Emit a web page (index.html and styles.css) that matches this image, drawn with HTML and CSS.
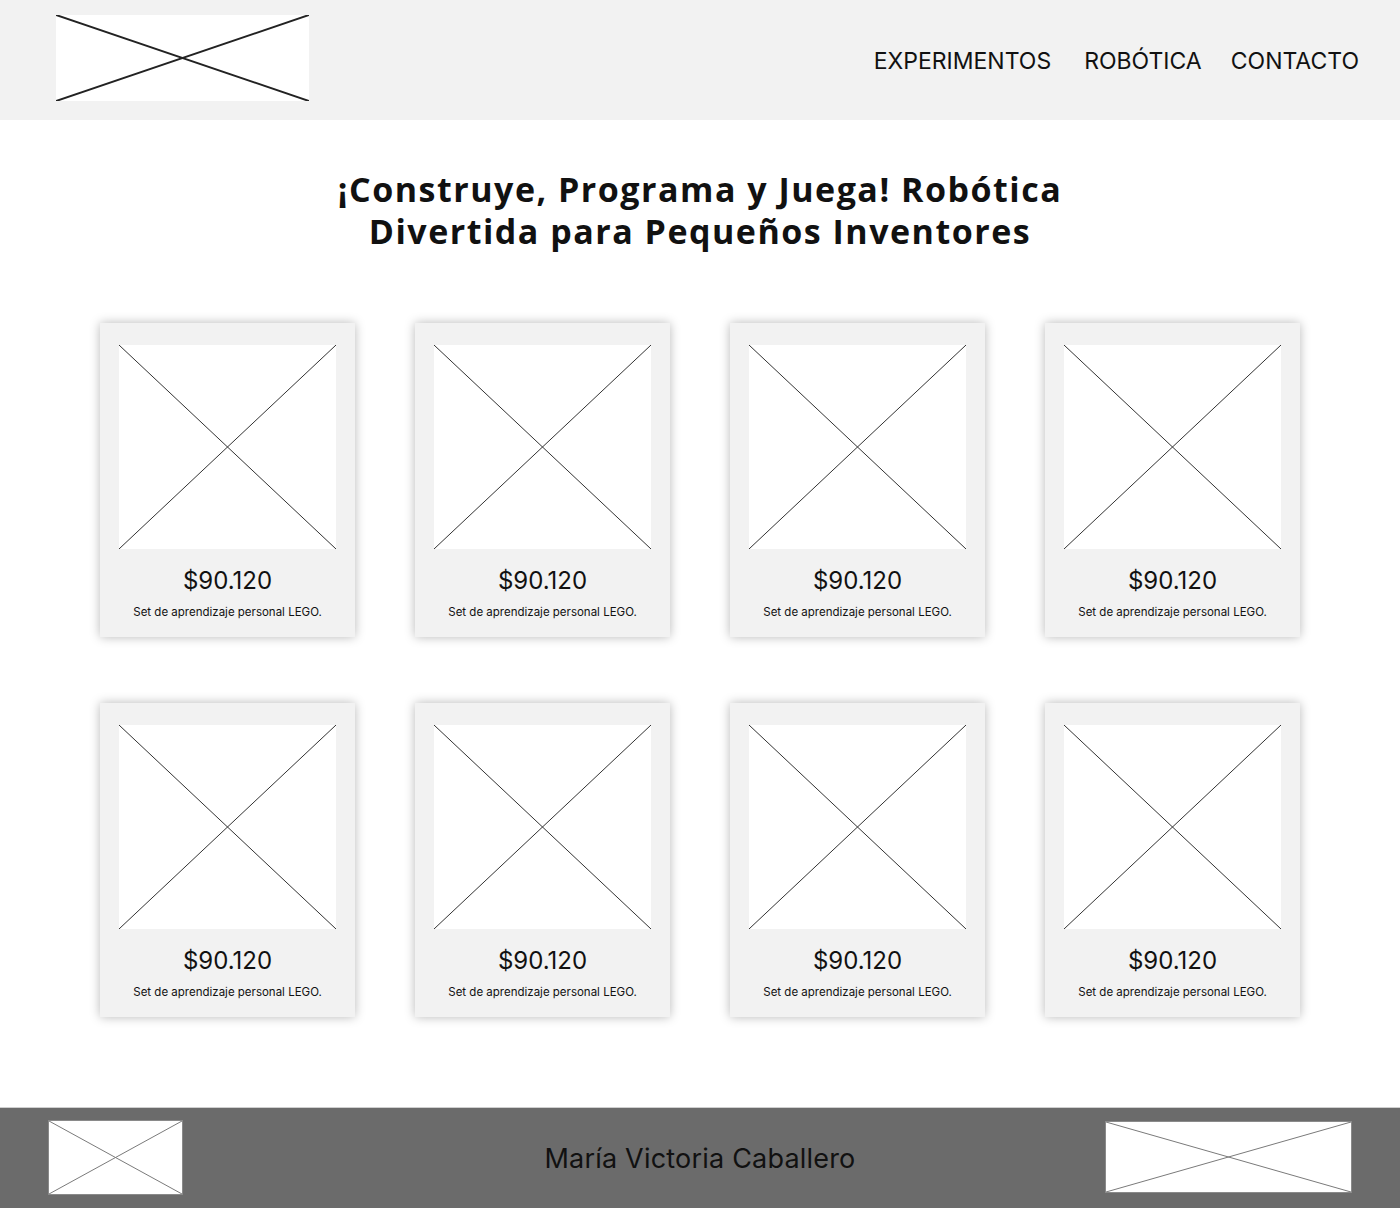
FILE: index.html
```html
<!DOCTYPE html>
<html lang="es">
<head>
<meta charset="utf-8">
<title>Robótica</title>
<link rel="stylesheet" href="styles.css">
</head>
<body>
<header class="header">
  <div class="logo">
    <svg class="ph" viewBox="0 0 253 86" preserveAspectRatio="none"><line x1="0" y1="0" x2="253" y2="86"/><line x1="0" y1="86" x2="253" y2="0"/></svg>
  </div>
  <nav class="nav">
    <a class="nav-item n1">EXPERIMENTOS</a>
    <a class="nav-item n2">ROBÓTICA</a>
    <a class="nav-item n3">CONTACTO</a>
  </nav>
</header>
<main class="main">
  <h1 class="title">¡Construye, Programa y Juega! Robótica<br>Divertida para Pequeños Inventores</h1>
  <section class="grid">
    <article class="card"><div class="img"><svg viewBox="0 0 217 204" preserveAspectRatio="none"><line x1="0" y1="0" x2="217" y2="204"/><line x1="0" y1="204" x2="217" y2="0"/></svg></div><p class="price">$90.120</p><p class="desc">Set de aprendizaje personal LEGO.</p></article>
    <article class="card"><div class="img"><svg viewBox="0 0 217 204" preserveAspectRatio="none"><line x1="0" y1="0" x2="217" y2="204"/><line x1="0" y1="204" x2="217" y2="0"/></svg></div><p class="price">$90.120</p><p class="desc">Set de aprendizaje personal LEGO.</p></article>
    <article class="card"><div class="img"><svg viewBox="0 0 217 204" preserveAspectRatio="none"><line x1="0" y1="0" x2="217" y2="204"/><line x1="0" y1="204" x2="217" y2="0"/></svg></div><p class="price">$90.120</p><p class="desc">Set de aprendizaje personal LEGO.</p></article>
    <article class="card"><div class="img"><svg viewBox="0 0 217 204" preserveAspectRatio="none"><line x1="0" y1="0" x2="217" y2="204"/><line x1="0" y1="204" x2="217" y2="0"/></svg></div><p class="price">$90.120</p><p class="desc">Set de aprendizaje personal LEGO.</p></article>
    <article class="card"><div class="img"><svg viewBox="0 0 217 204" preserveAspectRatio="none"><line x1="0" y1="0" x2="217" y2="204"/><line x1="0" y1="204" x2="217" y2="0"/></svg></div><p class="price">$90.120</p><p class="desc">Set de aprendizaje personal LEGO.</p></article>
    <article class="card"><div class="img"><svg viewBox="0 0 217 204" preserveAspectRatio="none"><line x1="0" y1="0" x2="217" y2="204"/><line x1="0" y1="204" x2="217" y2="0"/></svg></div><p class="price">$90.120</p><p class="desc">Set de aprendizaje personal LEGO.</p></article>
    <article class="card"><div class="img"><svg viewBox="0 0 217 204" preserveAspectRatio="none"><line x1="0" y1="0" x2="217" y2="204"/><line x1="0" y1="204" x2="217" y2="0"/></svg></div><p class="price">$90.120</p><p class="desc">Set de aprendizaje personal LEGO.</p></article>
    <article class="card"><div class="img"><svg viewBox="0 0 217 204" preserveAspectRatio="none"><line x1="0" y1="0" x2="217" y2="204"/><line x1="0" y1="204" x2="217" y2="0"/></svg></div><p class="price">$90.120</p><p class="desc">Set de aprendizaje personal LEGO.</p></article>
  </section>
</main>
<footer class="footer">
  <div class="flogo flogo-left"><svg viewBox="0 0 135 75" preserveAspectRatio="none"><line x1="0" y1="0" x2="135" y2="75"/><line x1="0" y1="75" x2="135" y2="0"/></svg></div>
  <p class="fname">María Victoria Caballero</p>
  <div class="flogo flogo-right"><svg viewBox="0 0 247 72" preserveAspectRatio="none"><line x1="0" y1="0" x2="247" y2="72"/><line x1="0" y1="72" x2="247" y2="0"/></svg></div>
</footer>
</body>
</html>
```

FILE: styles.css
```css
* { box-sizing: border-box; }
html, body { margin: 0; padding: 0; }
body {
  width: 1400px;
  background: #ffffff;
  font-family: "Inter", "Liberation Sans", sans-serif;
  color: #111;
}
p { margin: 0; }

.header {
  height: 120px;
  background: #f2f2f2;
  display: flex;
  align-items: flex-start;
  justify-content: space-between;
  padding: 15px 41px 0 56px;
}
.logo {
  width: 253px;
  height: 86px;
  background: #fff;
}
.logo svg { display: block; width: 100%; height: 100%; }
.logo line { stroke: #222; stroke-width: 2; }

.nav {
  display: flex;
  align-items: center;
  margin-top: 31px;
}
.nav-item {
  font-size: 23px;
  line-height: 30px;
  font-weight: 400;
  color: #111;
}
.n2 { margin-left: 33px; }
.n3 { margin-left: 29px; }

.main {
  padding: 48px 0 90px;
}
.title {
  margin: 0;
  text-align: center;
  font-family: "Open Sans", "Liberation Sans", sans-serif;
  font-weight: 700;
  font-size: 34px;
  line-height: 42px;
  letter-spacing: 1.5px;
  color: #111;
}
.grid {
  width: 1200px;
  margin: 71px auto 0;
  display: grid;
  grid-template-columns: repeat(4, 255px);
  column-gap: 60px;
  row-gap: 66px;
}
.card {
  height: 314px;
  background: #f2f2f2;
  box-shadow: 0 0 10px rgba(0,0,0,0.28);
  padding: 22px 19px 0;
  display: flex;
  flex-direction: column;
  align-items: center;
}
.img {
  width: 217px;
  height: 204px;
  background: #fff;
}
.img svg { display: block; width: 100%; height: 100%; }
.img line { stroke: #333; stroke-width: 1; }
.price {
  margin-top: 17px;
  font-size: 24px;
  line-height: 30px;
  color: #111;
}
.desc {
  margin-top: 8px;
  font-size: 11.5px;
  line-height: 16px;
  color: #111;
}

.footer {
  height: 101px;
  background: #6b6b6b;
  display: grid;
  grid-template-columns: 1fr auto 1fr;
  align-items: start;
  padding: 0 48px 0 48px;
  border-top: 1px solid #cfcfcf;
}
.flogo {
  background: #fff;
  border: 1px solid #8a8a8a;
}
.flogo svg { display: block; width: 100%; height: 100%; }
.flogo line { stroke: #777; stroke-width: 1; }
.flogo-left { width: 135px; height: 75px; margin-top: 12px; justify-self: start; }
.flogo-right { width: 247px; height: 72px; margin-top: 13px; justify-self: end; }
.fname {
  margin-top: 35px;
  font-size: 27px;
  line-height: 32px;
  letter-spacing: 0.2px;
  color: #111;
}
```
